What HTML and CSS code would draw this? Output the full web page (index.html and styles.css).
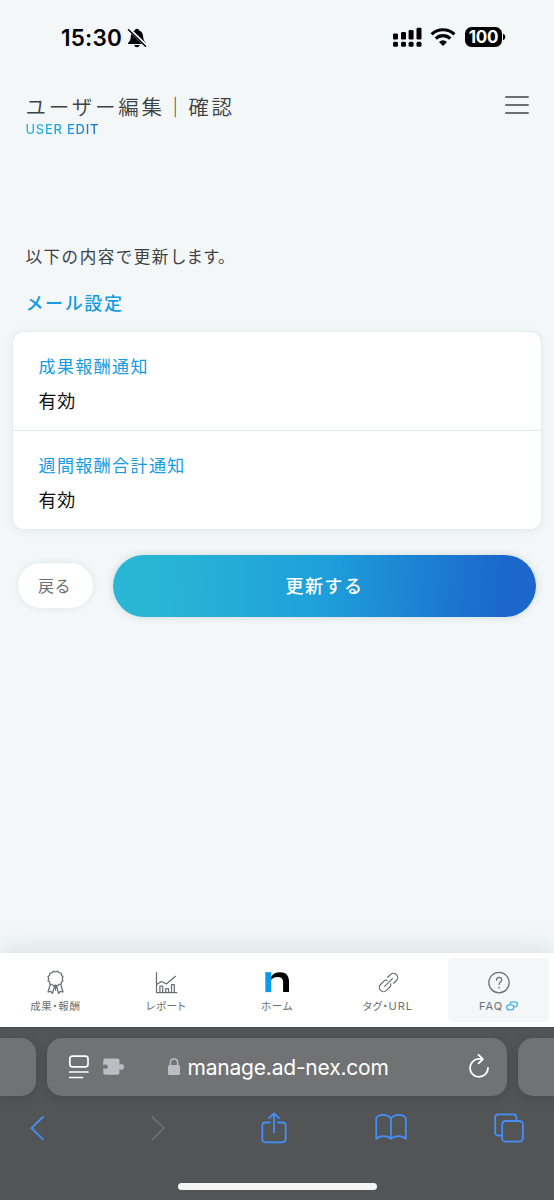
FILE: index.html
```html
<!DOCTYPE html>
<html lang="ja">
<head>
<meta charset="utf-8">
<title>ユーザー編集｜確認</title>
<link rel="stylesheet" href="styles.css">
</head>
<body>
<div class="phone">
  <div class="status">
    <div class="clock"><span class="time">15:30</span>
      <svg class="bell" width="20" height="22" viewBox="0 0 20 22"><path d="M1 17c0-1.800 2.200-2.500 2.600-5.500.4-3.500.5-6.600 3.900-7.700C7.900 2.400 8.800 1.700 10 1.700s2.100.7 2.500 2.100c3.400 1.100 3.500 4.200 3.900 7.700.4 3 2.600 3.700 2.600 5.500zM7.300 18.100h5.400c-.3 1.400-1.400 2.200-2.700 2.200s-2.400-.8-2.700-2.200z"/><path d="M2 2.300 19 18.600" stroke="#f3f7f8" stroke-width="3.400"/><path d="M1.500 2.700 18.500 19.200" stroke="#000" stroke-width="1.500" stroke-linecap="round"/></svg>
    </div>
    <div class="signals">
      <svg width="30" height="20" viewBox="0 0 30 20"><rect x="1" y="6.500" width="5" height="6" rx="1.300"/><rect x="9" y="5" width="5" height="7.500" rx="1.300"/><rect x="16.600" y="3" width="5" height="9.500" rx="1.300"/><rect x="24.500" y="0.700" width="5" height="11.800" rx="1.300"/><rect x="1" y="14.800" width="5" height="5" rx="1.500"/><rect x="9" y="14.800" width="5" height="5" rx="1.500"/><rect x="16.600" y="14.800" width="5" height="5" rx="1.500"/><rect x="24.500" y="14.800" width="5" height="5" rx="1.500"/></svg>
      <svg class="wifi" width="26" height="20" viewBox="0 0 26 20"><g fill="none" stroke="#000" stroke-width="3.100"><path d="M1.600 7.300a16.500 16.500 0 0 1 22.800 0"/><path d="M5.700 11.600a10.500 10.500 0 0 1 14.600 0"/></g><path d="M9 14.900a5.800 5.800 0 0 1 8 0L13 18.900z"/></svg>
      <span class="battery">100</span><svg class="cap" width="3" height="8" viewBox="0 0 3 8"><path d="M0 .8c3 1 3 5.400 0 6.400z"/></svg>
    </div>
  </div>

  <header class="header">
    <div>
      <h1 class="title">ユーザー編集｜確認</h1>
      <p class="subtitle">USER EDIT</p>
    </div>
    <div class="menu"><i></i><i></i><i></i></div>
  </header>

  <main class="main">
    <p class="lead">以下の内容で更新<span>します。</span></p>
    <h2 class="section">メール設定</h2>
    <dl class="card">
      <div class="row"><dt>成果報酬通知</dt><dd>有効</dd></div>
      <div class="row"><dt>週間報酬合計通知</dt><dd>有効</dd></div>
    </dl>
    <div class="actions">
      <button class="back">戻る</button>
      <button class="submit">更新する</button>
    </div>
  </main>

  <nav class="nav">
    <a class="item">
      <svg width="24" height="26" viewBox="0 0 24 26"><g class="line"><path d="M12.500 2 14.500 1.200 16 2.800 18.200 3 18.400 5.200 20 6.700 19.200 8.700 20 10.700 18.400 12 18.200 14.200 16 14.400 14.500 15.800 12.500 15.100 10.500 15.800 9 14.400 6.800 14.200 6.600 12 5 10.700 5.800 8.700 5 6.700 6.600 5.200 6.800 3 9 2.800 10.500 1.200z"/><path d="M7.200 14.800 5 22 7.500 21.300 9.500 23.300 11.700 15.800M17.800 14.800l2.200 7.200-2.500-.7-2 2-2.200-7.500M12.500 16.500v3.500"/></g></svg>
      <span>成果・報酬</span>
    </a>
    <a class="item">
      <svg width="24" height="26" viewBox="0 0 24 26"><g class="line"><path d="M2.500 2.500v20h20.300M2.700 14.500l4.500-3 5.500 2.300L21.500 6.300M5.900 22.300v-6.100h2.800v6.100M11.700 22.300V18.500h2.800v3.800M17.500 22.300v-7.700h2.800v7.700"/></g></svg>
      <span>レポート</span>
    </a>
    <a class="item">
      <svg width="26" height="26" viewBox="0 0 26 26"><path fill="#0a9be8" d="M1.300 2.100h6v20h-6z"/><path d="M7.300 6.500C9 3.700 12 2.200 16 2.200c5.800 0 9 3.300 9 9v10.900h-5.900V11.900c0-3.400-1.900-5-5.600-5-2.900 0-5.100.9-6.200 3z"/></svg>
      <span>ホーム</span>
    </a>
    <a class="item">
      <svg width="24" height="26" viewBox="0 0 24 26"><g class="line" transform="rotate(-45 12.500 12.500)"><path d="M10.300 8.300H5.500a4.200 4.200 0 0 0 0 8.400h4.800q1.700 0 2.700-1.700M13 10Q12 8.300 10.300 8.300M15.700 8.300h3.800a4.200 4.200 0 0 1 0 8.400h-3.800M7 12.500h11"/></g></svg>
      <span class="tag">タグ・<b>URL</b></span>
    </a>
    <a class="item current">
      <svg width="24" height="26" viewBox="0 0 24 26"><g class="line"><circle cx="12" cy="12.600" r="10.200"/><path d="M9.500 10.200c0-1.800 1-2.900 2.600-2.900s2.600 1 2.600 2.500c0 2-2.500 2.100-2.500 4.600M12.100 17v1.100"/></g></svg>
      <span class="faq">FAQ<svg width="12" height="10" viewBox="0 0 12 10" fill="none" stroke="#1da4ee" stroke-width="1.100"><rect x=".8" y="4" width="6.800" height="4.800" rx="1.700"/><path d="M4 3.400V2.600Q4 1 5.600 1h4Q11.200 1 11.200 2.600v1.500Q11.200 5.700 9.600 5.700H8.200"/></svg></span>
    </a>
  </nav>

  <footer class="browser">
    <div class="tabs">
      <div class="tab side-left"></div>
      <div class="tab address">
        <svg width="56" height="28" viewBox="0 0 56 28"><g fill="none" stroke="#fff" stroke-width="1.700" stroke-linecap="round"><rect x="1.800" y="3.100" width="18.200" height="10.700" rx="2.500"/><path d="M1.700 19h18.200M1.700 24.500h12.700"/></g><path fill="#bcbcc4" d="M37.300 5.500h12.200q2 0 2 2v4.200c2-1.700 4.500-.5 4.500 2.200s-2.500 3.800-4.500 2.200v3.600q0 2-2 2H37.300q-2 0-2-2v-4.700c1.700 1.400 4.500 1 4.500-1.300s-2.800-2.700-4.500-1.300V7.500q0-2 2-2z"/></svg>
        <svg class="lock" width="14" height="20" viewBox="0 0 14 20"><rect x="1" y="8" width="12" height="10" rx="1.500" fill="#bcbcc4"/><path d="M3.400 9V5.500C3.400.8 10.600.8 10.600 5.500V9" fill="none" stroke="#bcbcc4" stroke-width="1.500"/></svg>
        <span class="url">manage.ad-nex.com</span>
        <svg class="reload" width="22" height="26" viewBox="0 0 22 26" fill="none" stroke="#fff" stroke-width="1.800" stroke-linecap="round" stroke-linejoin="round"><path d="M20 13.800A9 9 0 1 1 11 4.900h3.600M10.600 .9l4.300 4.200-4.300 4.300"/></svg>
      </div>
      <div class="tab side-right"></div>
    </div>
    <div class="tools">
      <svg width="16" height="26" viewBox="0 0 16 26"><path d="M14 2 2.400 13.200l11.600 11.200"/></svg>
      <svg class="disabled" width="16" height="26" viewBox="0 0 16 26"><path d="M2.300 2 14 13.200 2.300 24.400"/></svg>
      <svg width="26" height="34" viewBox="0 0 26 34"><path d="M8.800 11.500H4.500Q1.300 11.500 1.300 14.700v13.400q0 3.200 3.200 3.200h17q3.200 0 3.200-3.200V14.700q0-3.200-3.200-3.200h-4.300M13 21.200V2.300M8.100 7.200 13 2.300l4.900 4.900"/></svg>
      <svg width="32" height="28" viewBox="0 0 32 28"><path d="M16 4.200C12-.2 4-.2 1.200 3.800v21.100c3.700-3.700 11-3.700 14.800 0 3.800-3.700 11.100-3.700 14.800 0V3.800C28-.2 20-.2 16 4.200zv20.600"/></svg>
      <svg width="30" height="30" viewBox="0 0 30 30"><path d="M7.200 22.500H4.300q-3.100 0-3.100-3.100V4.400q0-3.100 3.100-3.100h15q3.100 0 3.100 3.100v2.800"/><rect x="8.200" y="8" width="20.700" height="20.600" rx="3.400"/></svg>
    </div>
    <div class="indicator"></div>
  </footer>
</div>
</body>
</html>
```
FILE: styles.css
```css
* { box-sizing: border-box; margin: 0; padding: 0; }
body { background: #f3f7f8; font-family: "Noto Sans CJK JP", sans-serif; color: #3c4143; }
svg { display: block; flex: none; }
.phone { width: 554px; height: 1200px; overflow: hidden; display: flex; flex-direction: column; background: #f3f7f8; }

.status { height: 76px; padding: 0 48px 0 61px; display: flex; justify-content: space-between; color: #000; }
.clock { display: flex; padding-top: 27px; }
.time { width: 66px; font: 600 22.500px/22px Inter, sans-serif; letter-spacing: .200px; white-space: nowrap; }
.signals { display: flex; padding-top: 27px; }
.wifi { margin: 0 9px 0 8px; }
.battery { width: 37px; height: 20px; border-radius: 6.500px; background: #000; color: #fff; font: 700 17px/21px Inter, sans-serif; letter-spacing: -.3px; text-align: center; }
.cap { margin: 6px 0 0 1px; }

.header { height: 158px; padding: 17px 25px 0 25.500px; display: flex; justify-content: space-between; }
.title { font-size: 20.500px; font-weight: 350; line-height: 28px; letter-spacing: 2.800px; color: #3c4143; white-space: nowrap; margin-top: -1px; }
.subtitle { width: 76px; margin-top: 2px; font: 500 13px/14px Inter, sans-serif; letter-spacing: .750px; white-space: nowrap; background: linear-gradient(90deg, #29b6d4, #1b9fe0 50%, #1c67cd); -webkit-background-clip: text; background-clip: text; color: transparent; }
.menu { width: 24px; padding-top: 3px; display: flex; flex-direction: column; gap: 5.700px; }
.menu i { height: 2.200px; border-radius: 1px; background: #6c7072; }

.main { flex: 1; }
.lead { margin: 9px 0 0 25.500px; font-size: 16.500px; line-height: 26px; letter-spacing: 1.550px; }
.lead span { letter-spacing: .100px; }
.section { margin: 19.500px 0 0 25.500px; font-size: 18px; font-weight: 500; line-height: 26px; letter-spacing: 1.600px; color: #149be2; }
.card { margin: 17.500px 13px 0; height: 197px; border-radius: 10px; background: #fff; box-shadow: 0 0 0 1px #e5edf0, 0 1px 10px rgba(70, 100, 110, .1); }
.row { height: 98px; padding: 20.500px 25px 0 25.500px; }
.row + .row { height: 99px; border-top: 1.500px solid #dfe8ec; }
.row dt { font-size: 17px; line-height: 26px; letter-spacing: 1.400px; color: #149be2; }
.row dd { margin-top: 8px; font-size: 18px; line-height: 26px; letter-spacing: .700px; color: #111; }
.actions { margin: 26px 18px 0; height: 62px; display: flex; align-items: flex-start; gap: 20px; }
button { border: 0; font-family: inherit; }
.back { width: 75px; height: 45px; margin-top: 8px; border-radius: 23px; padding: 0 2px 1px 0; background: #fff; color: #6c7072; font-size: 16px; letter-spacing: .500px; box-shadow: 0 0 6px rgba(70, 90, 100, .12); }
.submit { flex: 1; height: 61.500px; border-radius: 31px; padding: 0 0 2px 0; background: linear-gradient(94deg, #29b6d4 10%, #1e9fda 50%, #1b67cb 92%); color: #fff; font-size: 18px; font-weight: 500; letter-spacing: 1.500px; box-shadow: 0 0 9px rgba(70, 90, 100, .2); }

.nav { height: 74px; flex: none; padding: 5px 0; display: grid; grid-template-columns: repeat(5, 1fr); background: #fff; box-shadow: 0 -4px 28px rgba(70, 100, 115, .15); }
.item { margin: 0 5px; padding-top: 12px; display: flex; flex-direction: column; align-items: center; border-radius: 5px; color: #6c7072; font-size: 10.500px; line-height: 16px; }
.item span { margin-top: 2px; white-space: nowrap; letter-spacing: .650px; font-feature-settings: "palt"; }
.item b { font: 400 11px/16px Inter, sans-serif; letter-spacing: 1px; }
.item .line { fill: none; stroke: #6c7072; stroke-width: 1.250; stroke-linecap: round; stroke-linejoin: round; }
.item.current { background: #f3f7f8; }
.item .faq { display: flex; align-items: center; gap: 3px; font-family: Inter, sans-serif; font-size: 11px; letter-spacing: 1px; }

.browser { height: 173px; flex: none; background: #525455; border-top: 1px solid #464849; display: flex; flex-direction: column; }
.tabs { padding-top: 10px; display: flex; gap: 11px; }
.tab { height: 58px; background: #707273; box-shadow: 0 2px 12px rgba(0, 0, 0, .12); }
.side-left { width: 36px; border-radius: 0 15px 15px 0; }
.side-right { width: 36px; border-radius: 15px 0 0 15px; }
.address { flex: 1; border-radius: 15px; padding: 0 17px 0 21px; display: flex; align-items: center; }
.lock { margin-left: 42.500px; }
.url { margin: 2px auto 0 7px; color: #fff; font: 400 21px/30px Inter, sans-serif; letter-spacing: -.2px; white-space: nowrap; }
.tools { height: 64px; padding-left: 29px; display: flex; align-items: center; }
.tools svg { fill: none; stroke: #438ff7; stroke-width: 1.800; stroke-linecap: round; stroke-linejoin: round; }
.tools svg:nth-child(2) { margin-left: 105px; }
.tools svg:nth-child(3) { margin-left: 95px; }
.tools svg:nth-child(4) { margin-left: 88px; }
.tools svg:nth-child(5) { margin-left: 87px; }
.tools .disabled { stroke: #6c6e6f; }
.indicator { width: 199px; height: 7px; margin: 23px 0 0 178px; border-radius: 4px; background: #f4f4f4; }
```
